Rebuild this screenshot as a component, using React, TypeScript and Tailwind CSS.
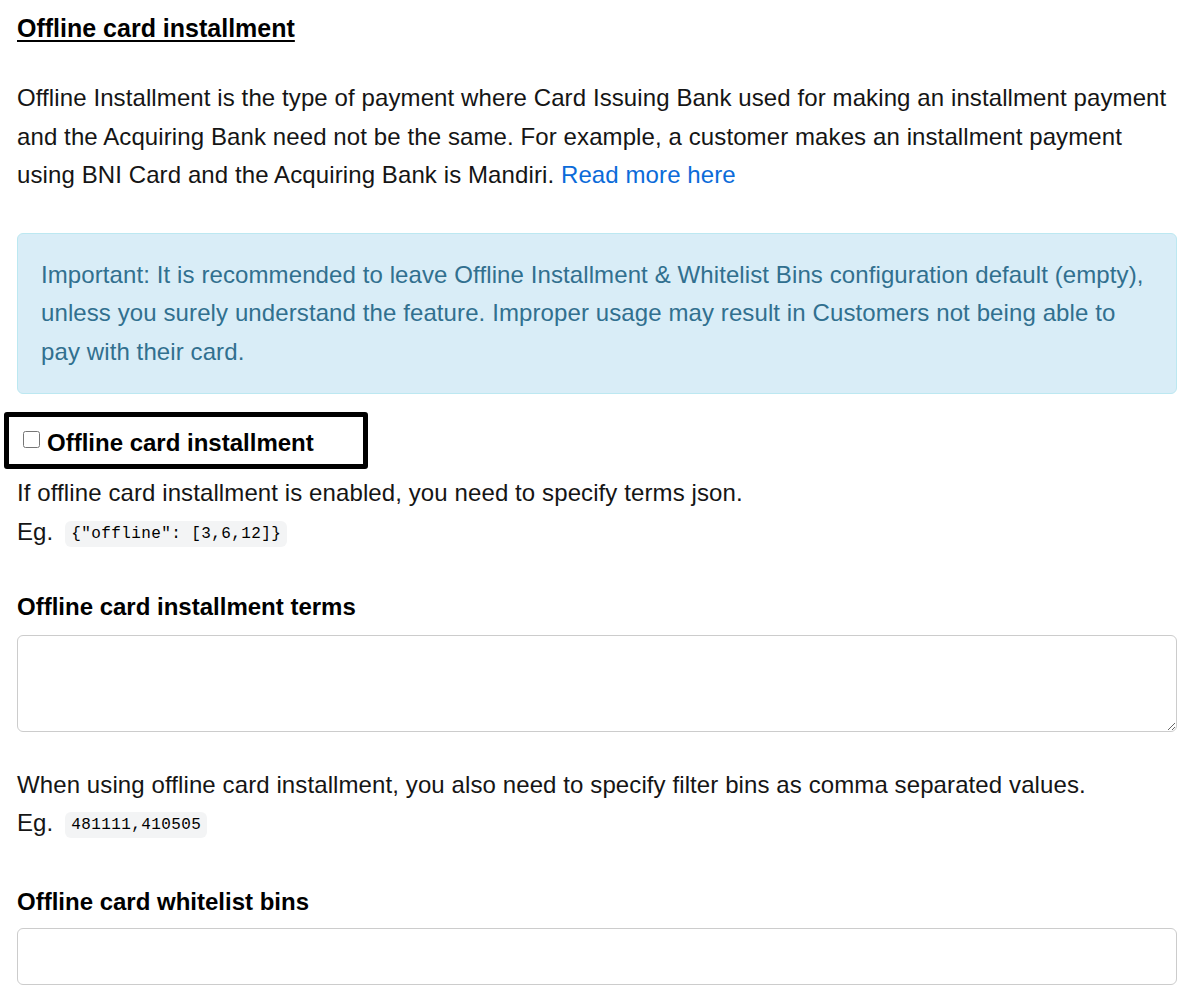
import React from "react";

function Code({ children }: { children: React.ReactNode }) {
  return (
    <code className="ml-[12px] inline-block rounded-md bg-[#f3f4f5] px-[6px] align-[2px] font-['Liberation_Mono',monospace] text-[16px] leading-[26px] tracking-[0.4px] text-black">
      {children}
    </code>
  );
}

export default function App() {
  return (
    <div className="min-h-screen bg-white px-[17px] font-['Liberation_Sans',Arial,sans-serif] text-[24px] leading-[38.5px] tracking-[0.1px] text-[#151515]">
      <h2 className="pt-[9px] text-[25px] font-bold leading-[38px] tracking-normal text-black underline underline-offset-[3px]">
        Offline card installment
      </h2>

      <p className="mt-[32px]">
        Offline Installment is the type of payment where Card Issuing Bank used for making an installment payment and
        the Acquiring Bank need not be the same. For example, a customer makes an installment payment using BNI Card
        and the Acquiring Bank is Mandiri.{" "}
        <a href="#" className="text-[#0b6bd9]">
          Read more here
        </a>
      </p>

      <div className="mt-[38px] rounded-md border border-[#bce8f1] bg-[#d9edf7] px-[23px] py-[22px] text-[#31708f]">
        Important: It is recommended to leave Offline Installment &amp; Whitelist Bins configuration default (empty),
        unless you surely understand the feature. Improper usage may result in Customers not being able to pay with
        their card.
      </div>

      <div className="-ml-[13px] mt-[18px] flex h-[57px] w-[364px] items-center gap-[7px] rounded-[3px] border-[5px] border-black pl-[14px]">
        <input type="checkbox" className="h-[17px] w-[17px] -translate-y-[1px] rounded-sm" />
        <span className="mt-[5px] font-bold tracking-normal text-black">Offline card installment</span>
      </div>

      <p className="mt-[5px]">If offline card installment is enabled, you need to specify terms json.</p>
      <p>
        Eg.<Code>{'{"offline": [3,6,12]}'}</Code>
      </p>

      <label className="mt-[37px] block font-bold tracking-normal text-black">Offline card installment terms</label>
      <textarea className="mt-[8px] block h-[97px] w-full rounded-md border border-[#ccc] bg-white" />

      <p className="mt-[34px]">When using offline card installment, you also need to specify filter bins as comma separated values.</p>
      <p>
        Eg.<Code>481111,410505</Code>
      </p>

      <label className="mt-[40px] block font-bold tracking-normal text-black">Offline card whitelist bins</label>
      <input type="text" className="mt-[7px] block h-[57px] w-full rounded-md border border-[#ccc] bg-white" />
    </div>
  );
}
